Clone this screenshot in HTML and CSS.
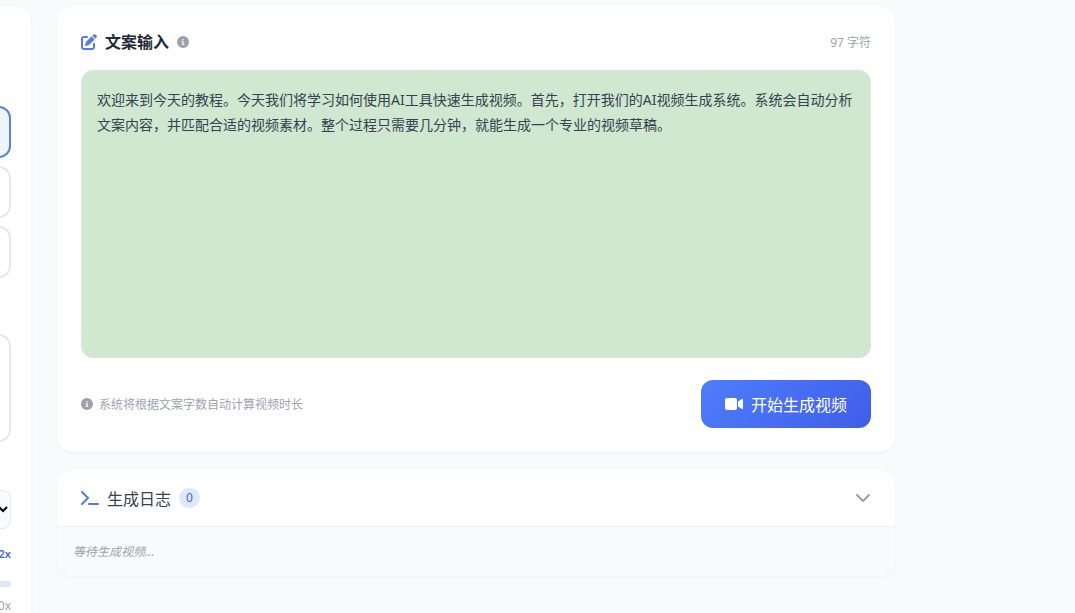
FILE: index.html
```html
<!DOCTYPE html>
<html lang="zh-CN">
<head>
  <meta charset="UTF-8">
  <meta name="viewport" content="width=device-width, initial-scale=1.0">
  <title>AI视频生成</title>
  <link rel="stylesheet" href="styles.css">
</head>
<body>
  <div class="layout">

    <aside class="sidebar">
      <div class="option-list">
        <button type="button" class="option active"></button>
        <button type="button" class="option"></button>
        <button type="button" class="option"></button>
      </div>
      <div class="preview"></div>
      <select class="voice-select"><option></option></select>
      <output class="speed-value" for="speed">2x</output>
      <input type="range" id="speed" class="speed-range" min="0" max="100" value="20">
      <span class="speed-max">0x</span>
    </aside>

    <main class="content">
      <section class="card editor">
        <div class="editor-header">
          <label class="editor-title" for="script-text">
            <svg class="icon icon-title" viewBox="0 0 512 512"><path d="M471.6 21.7c-21.9-21.9-57.3-21.9-79.2 0L362.3 51.7l97.9 97.9 30.1-30.1c21.9-21.9 21.9-57.3 0-79.2L471.6 21.7zm-299.2 220c-6.1 6.1-10.8 13.6-13.5 21.9l-29.6 88.8c-2.9 8.6-.6 18.1 5.8 24.6s15.9 8.7 24.6 5.8l88.8-29.6c8.2-2.7 15.7-7.4 21.9-13.5L437.7 172.3 339.7 74.3 172.4 241.7zM96 64C43 64 0 107 0 160V416c0 53 43 96 96 96H352c53 0 96-43 96-96V320c0-17.7-14.3-32-32-32s-32 14.3-32 32v96c0 17.7-14.3 32-32 32H96c-17.7 0-32-14.3-32-32V160c0-17.7 14.3-32 32-32h96c17.7 0 32-14.3 32-32s-14.3-32-32-32H96z"/></svg>
            文案输入
            <svg class="icon icon-info" viewBox="0 0 512 512"><path d="M256 512A256 256 0 1 0 256 0a256 256 0 1 0 0 512zM216 336h24V272H216c-13.3 0-24-10.7-24-24s10.7-24 24-24h48c13.3 0 24 10.7 24 24v88h8c13.3 0 24 10.7 24 24s-10.7 24-24 24H216c-13.3 0-24-10.7-24-24s10.7-24 24-24zm40-208a32 32 0 1 1 0 64 32 32 0 1 1 0-64z"/></svg>
          </label>
          <span class="char-count">97 字符</span>
        </div>

        <textarea id="script-text" class="script-text" spellcheck="false">欢迎来到今天的教程。今天我们将学习如何使用AI工具快速生成视频。首先，打开我们的AI视频生成系统。系统会自动分析文案内容，并匹配合适的视频素材。整个过程只需要几分钟，就能生成一个专业的视频草稿。</textarea>

        <div class="editor-footer">
          <span class="hint">
            <svg class="icon icon-info" viewBox="0 0 512 512"><path d="M256 512A256 256 0 1 0 256 0a256 256 0 1 0 0 512zM216 336h24V272H216c-13.3 0-24-10.7-24-24s10.7-24 24-24h48c13.3 0 24 10.7 24 24v88h8c13.3 0 24 10.7 24 24s-10.7 24-24 24H216c-13.3 0-24-10.7-24-24s10.7-24 24-24zm40-208a32 32 0 1 1 0 64 32 32 0 1 1 0-64z"/></svg>
            系统将根据文案字数自动计算视频时长
          </span>
          <button type="button" class="generate-btn">
            <svg class="icon icon-video" viewBox="0 0 576 512"><path d="M0 128C0 92.7 28.7 64 64 64H320c35.3 0 64 28.7 64 64V384c0 35.3-28.7 64-64 64H64c-35.3 0-64-28.7-64-64V128zM559.1 99.8c10.4 5.6 16.9 16.4 16.9 28.2V384c0 11.8-6.5 22.6-16.9 28.2s-23 5-32.9-1.6l-96-64L416 337.1V320 192 174.9l14.2-9.5 96-64c9.8-6.5 22.4-7.2 32.9-1.6z"/></svg>
            开始生成视频
          </button>
        </div>
      </section>

      <section class="card log">
        <button type="button" class="log-header" aria-expanded="true" aria-controls="log-body">
          <svg class="icon icon-terminal" viewBox="0 0 576 512"><path d="M9.4 86.6C-3.1 74.1-3.1 53.9 9.4 41.4s32.8-12.5 45.3 0l192 192c12.5 12.5 12.5 32.8 0 45.3l-192 192c-12.5 12.5-32.8 12.5-45.3 0s-12.5-32.8 0-45.3L178.7 256 9.4 86.6zM256 416H544c17.7 0 32 14.3 32 32s-14.3 32-32 32H256c-17.7 0-32-14.3-32-32s14.3-32 32-32z"/></svg>
          <span>生成日志</span>
          <span class="badge">0</span>
          <svg class="icon-chevron" viewBox="0 0 16 16"><path d="M2 5l6 6 6-6"/></svg>
        </button>
        <div id="log-body" class="log-body">等待生成视频...</div>
      </section>
    </main>

  </div>
</body>
</html>
```
FILE: styles.css
```css
* {
  box-sizing: border-box;
}

body {
  margin: 0;
  height: 100vh;
  overflow: hidden;
  background: #f9fafc;
  color: #374151;
  font-family: "Noto Sans", "Noto Sans CJK SC", sans-serif;
  font-size: 16px;
}

button, select, textarea {
  font-family: inherit;
}

.layout {
  display: flex;
  gap: 26px;
  padding-top: 6px;
}

/* sidebar, slid out past the left edge */
.sidebar {
  display: flex;
  flex-direction: column;
  flex: none;
  width: 320px;
  min-height: 100vh;
  margin-left: -289px;
  padding: 100px 20px 20px;
  background: #fff;
  border-radius: 16px;
  box-shadow: 0 0 3px rgba(0, 0, 0, 0.06);
}

.option-list {
  display: flex;
  flex-direction: column;
  gap: 8px;
}

.option {
  height: 52px;
  background: #fff;
  border: 2px solid #e5e7eb;
  border-radius: 12px;
}

.option.active {
  background: #eff5ff;
  border-color: #5a7fe8;
}

.preview {
  height: 108px;
  margin-top: 56px;
  border: 2px solid #e5e7eb;
  border-radius: 12px;
}

.voice-select {
  height: 39px;
  margin-top: 48px;
  background: #f9fafb;
  border: 1px solid #e5e7eb;
  border-radius: 8px;
  color: #000;
}

.speed-value {
  margin-top: 16px;
  color: #4763d8;
  font-size: 11px;
  font-weight: 600;
  line-height: 18px;
  text-align: right;
}

.speed-range {
  appearance: none;
  height: 6px;
  margin: 18px 0 10px;
  background: #e2e4f3;
  border-radius: 3px;
}

.speed-max {
  color: #9ca3af;
  font-size: 12px;
  line-height: 18px;
  text-align: right;
}

/* main column */
.content {
  display: flex;
  flex: 1;
  flex-direction: column;
  gap: 18px;
  align-self: flex-start;
  max-width: 838px;
}

.card {
  background: #fff;
  border-radius: 16px;
  box-shadow: 0 1px 3px rgba(0, 0, 0, 0.05);
}

.icon {
  flex: none;
  fill: #5479ee;
}

.editor {
  padding: 24px;
}

.editor-header,
.editor-footer {
  display: flex;
  align-items: center;
  justify-content: space-between;
}

.editor-title {
  display: flex;
  align-items: center;
  gap: 8px;
  color: #1f2937;
  font-weight: 600;
  line-height: 24px;
}

.icon-title {
  width: 16px;
  height: 16px;
}

.icon-info {
  width: 12px;
  height: 12px;
  fill: #9ca0ad;
}

.char-count,
.hint {
  color: #9ca3af;
  font-size: 12px;
}

.script-text {
  display: block;
  width: 100%;
  height: 288px;
  margin: 16px 0 22px;
  padding: 16px 15px;
  background: #cfe8cf;
  border: 1px solid #dbe6df;
  border-radius: 12px;
  color: #374151;
  font-size: 14px;
  line-height: 25px;
  outline: none;
  resize: none;
}

.hint {
  display: flex;
  align-items: center;
  gap: 6px;
}

.generate-btn {
  display: flex;
  align-items: center;
  gap: 8px;
  height: 48px;
  padding: 0 24px;
  background: linear-gradient(135deg, #4f7dfb, #3f5eea);
  border: none;
  border-radius: 12px;
  color: #fff;
  font-size: 16px;
  cursor: pointer;
}

.icon-video {
  width: 18px;
  height: 16px;
  fill: #fff;
}

/* log panel */
.log {
  overflow: hidden;
}

.log-header {
  display: flex;
  align-items: center;
  gap: 8px;
  width: 100%;
  height: 57px;
  padding: 0 24px;
  background: #fff;
  border: none;
  border-bottom: 1px solid #f1f2f5;
  color: #374151;
  font-size: 16px;
  cursor: pointer;
}

.icon-terminal {
  width: 18px;
  height: 16px;
}

.badge {
  padding: 0 7px;
  background: #dde8fd;
  border-radius: 10px;
  color: #4763d8;
  font-size: 12px;
  line-height: 20px;
}

.icon-chevron {
  width: 16px;
  height: 16px;
  margin-left: auto;
  fill: none;
  stroke: #9ca0ad;
  stroke-width: 2;
  stroke-linecap: round;
  stroke-linejoin: round;
}

.log-body {
  padding: 16px;
  background: #f9fafb;
  color: #9ca3af;
  font-size: 12px;
  font-style: italic;
  line-height: 17px;
}
```
